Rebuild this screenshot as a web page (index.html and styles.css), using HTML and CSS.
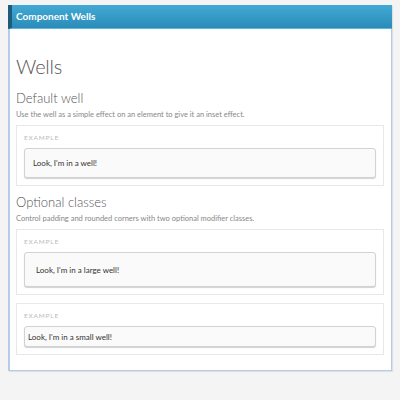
FILE: index.html
```
<!DOCTYPE html>
<html>
<head>
<meta charset="utf-8">
<link rel="stylesheet" href="styles.css">
</head>
<body>
<div class="panel">
  <div class="panel-header">Component Wells</div>
  <div class="panel-body">
    <h1 class="title">Wells</h1>
    <h2 class="subtitle">Default well</h2>
    <p class="desc">Use the well as a simple effect on an element to give it an inset effect.</p>
    <div class="example">
      <div class="example-label">EXAMPLE</div>
      <div class="well">Look, I'm in a well!</div>
    </div>
    <h2 class="subtitle">Optional classes</h2>
    <p class="desc">Control padding and rounded corners with two optional modifier classes.</p>
    <div class="example">
      <div class="example-label">EXAMPLE</div>
      <div class="well well-lg">Look, I'm in a large well!</div>
    </div>
    <div class="example">
      <div class="example-label">EXAMPLE</div>
      <div class="well well-sm">Look, I'm in a small well!</div>
    </div>
  </div>
</div>
</body>
</html>
```
FILE: styles.css
```
* { box-sizing: border-box; }
html, body { margin: 0; padding: 0; }
body {
  background: #f4f4f4;
  font-family: Lato, "Noto Sans", sans-serif;
  padding: 5px 8px;
}
.panel {
  width: 384px;
  box-shadow: 1px 1px 1px rgba(0,0,0,0.08);
}
.panel-header {
  height: 24px;
  background: linear-gradient(#41aad4, #2b8bb9);
  border-left: 4px solid #1d5b7a;
  border-bottom: 1px solid #5fb6dc;
  color: #fff;
  font-size: 10px;
  font-weight: 700;
  line-height: 23px;
  padding-left: 4px;
}
.panel-body {
  background: #fff;
  border: 1px solid #b4cbea;
  border-top: none;
  border-left-width: 2px;
  padding: 25px 7px 7px 6px;
}
.title {
  margin: 0;
  font-size: 20px;
  font-weight: 300;
  letter-spacing: -0.2px;
  color: #555;
  line-height: 24px;
}
.subtitle {
  margin: 12px 0 0;
  font-size: 13px;
  font-weight: 300;
  color: #555;
  line-height: 16px;
}
.example + .subtitle { margin-top: 7px; }
.desc {
  margin: 4px 0 5px;
  font-size: 7.5px;
  color: #888;
  line-height: 10px;
}
.example {
  border: 1px solid #e8e8e8;
  padding: 8px 7px 7px;
  margin-bottom: 8px;
}
.example-label {
  font-size: 6.5px;
  letter-spacing: 0.8px;
  color: #bbb;
  line-height: 8px;
  margin-bottom: 6px;
}
.well {
  background: #fafafa;
  border: 1px solid #d2d2d2;
  border-radius: 3px;
  box-shadow: 0 1px 1px rgba(0,0,0,0.18);
  height: 30px;
  display: flex;
  align-items: center;
  padding: 0 8px;
  font-size: 8px;
  color: #333;
}
.well-lg {
  height: 35px;
  padding: 0 11px;
}
.well-sm {
  height: 21px;
  padding: 0 3px;
}
```
